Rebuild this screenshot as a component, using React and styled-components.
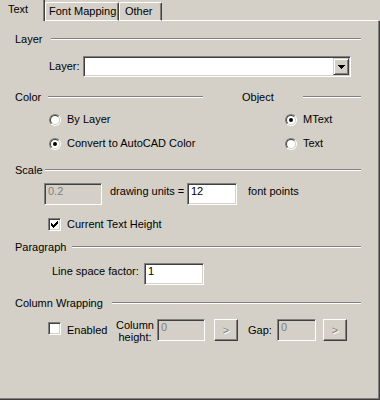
import styled, { createGlobalStyle } from "styled-components";

const GlobalStyle = createGlobalStyle`
  html, body {
    margin: 0;
    padding: 0;
    background: #d4d0c8;
  }
  body {
    font-family: "Liberation Sans", Arial, sans-serif;
    font-size: 11px;
    color: #000;
  }
`;

const Dialog = styled.div`
  width: 380px;
  height: 400px;
  overflow: hidden;
  display: flex;
  flex-direction: column;
  background: #d4d0c8;
`;

const TabStrip = styled.div`
  display: flex;
  align-items: flex-end;
  height: 21px;
  flex-shrink: 0;
`;

const ActiveTab = styled.div`
  box-sizing: border-box;
  width: 45px;
  height: 21px;
  padding: 3px 0 0 8px;
  line-height: 13px;
  border-right: 1px solid #404040;
  box-shadow: inset -1px 0 #808080;
`;

const Tab = styled.div`
  box-sizing: border-box;
  width: ${(p) => p.$w}px;
  height: 19px;
  padding: 2px 0 0 ${(p) => p.$pad}px;
  line-height: 13px;
  white-space: nowrap;
  border: 1px solid;
  border-color: #fff #404040 #fff #fff;
  border-radius: 2px 2px 0 0;
  box-shadow: inset -1px 0 #808080;
`;

const TabLine = styled.div`
  flex: 1;
  height: 1px;
  margin-right: 2px;
  background: #fff;
`;

const Panel = styled.div`
  flex: 1;
  box-sizing: border-box;
  padding: 11px 18px 0 15px;
  border-right: 1px solid #404040;
  border-bottom: 1px solid #404040;
  box-shadow: inset -1px -1px #808080;
  display: flex;
  flex-direction: column;
`;

const Header = styled.div`
  display: flex;
  align-items: center;
  height: 14px;
  line-height: 14px;
  margin-top: ${(p) => p.$mt || 0}px;
  &::after {
    content: "";
    flex: 1;
    border-top: 1px solid #808080;
    border-bottom: 1px solid #fff;
  }
`;

const HeaderLabel = styled.span`
  width: ${(p) => p.$w}px;
  flex-shrink: 0;
  white-space: nowrap;
`;

const Columns = styled.div`
  display: flex;
  gap: 39px;
  margin-top: ${(p) => p.$mt}px;
`;

const Column = styled.div`
  display: flex;
  flex-direction: column;
  ${(p) => (p.$w ? `width: ${p.$w}px;` : "flex: 1;")}
`;

const Row = styled.div`
  display: flex;
  align-items: ${(p) => p.$align || "center"};
  height: ${(p) => p.$h}px;
  margin-top: ${(p) => p.$mt}px;
  padding-left: ${(p) => p.$indent || 0}px;
  line-height: 13px;
  white-space: nowrap;
`;

const Label = styled.span`
  ${(p) => (p.$w ? `width: ${p.$w}px; flex-shrink: 0;` : "")}
  margin-left: ${(p) => p.$ml || 0}px;
`;

const StackLabel = styled.span`
  width: 38px;
  margin-right: 3px;
  line-height: 12px;
  padding-top: 1px;
  text-align: center;
  white-space: normal;
`;

const RadioOuter = styled.span`
  box-sizing: border-box;
  width: 12px;
  height: 12px;
  flex-shrink: 0;
  display: flex;
  border-radius: 50%;
  border: 1px solid;
  border-color: #808080 #fff #fff #808080;
`;

const RadioInner = styled.span`
  box-sizing: border-box;
  flex: 1;
  display: flex;
  align-items: center;
  justify-content: center;
  border-radius: 50%;
  border: 1px solid;
  border-color: #404040 #d4d0c8 #d4d0c8 #404040;
  background: #fff;
  &::after {
    content: "";
    width: 4px;
    height: 4px;
    border-radius: 50%;
    background: ${(p) => (p.$on ? "#000" : "transparent")};
  }
`;

const CheckBox = styled.span`
  box-sizing: border-box;
  width: 13px;
  height: 13px;
  flex-shrink: 0;
  display: flex;
  align-items: center;
  justify-content: center;
  border: 1px solid;
  border-color: #808080 #fff #fff #808080;
  box-shadow: inset 1px 1px #404040, inset -1px -1px #d4d0c8;
  background: #fff;
  ${(p) => (p.$top ? `align-self: flex-start; margin-top: ${p.$top}px;` : "")}
`;

const Field = styled.div`
  box-sizing: border-box;
  width: ${(p) => p.$w}px;
  height: 22px;
  flex-shrink: 0;
  padding: 1px 0 0 3px;
  line-height: 13px;
  border: 1px solid;
  border-color: #808080 #fff #fff #808080;
  box-shadow: inset 1px 1px #404040, inset -1px -1px #d4d0c8;
  background: ${(p) => (p.$disabled ? "#d4d0c8" : "#fff")};
  color: ${(p) => (p.$disabled ? "#808080" : "#000")};
`;

const Combo = styled.div`
  box-sizing: border-box;
  width: 268px;
  height: 21px;
  padding: 1px;
  display: flex;
  justify-content: flex-end;
  border: 1px solid;
  border-color: #808080 #fff #fff #808080;
  box-shadow: inset 1px 1px #404040, inset -1px -1px #d4d0c8;
  background: #fff;
`;

const DropButton = styled.span`
  box-sizing: border-box;
  width: 16px;
  height: 17px;
  display: flex;
  align-items: center;
  justify-content: center;
  border: 1px solid;
  border-color: #d4d0c8 #404040 #404040 #d4d0c8;
  box-shadow: inset 1px 1px #fff, inset -1px -1px #808080;
  background: #d4d0c8;
`;

const SmallButton = styled.div`
  box-sizing: border-box;
  width: 24px;
  height: 22px;
  margin-left: ${(p) => p.$ml}px;
  display: flex;
  align-items: center;
  justify-content: center;
  border: 1px solid;
  border-color: #fff #404040 #404040 #fff;
  box-shadow: inset -1px -1px #808080, inset 1px 1px #d4d0c8;
  color: #808080;
  text-shadow: 1px 1px #fff;
`;

const Radio = ({ on, children }) => (
  <>
    <RadioOuter>
      <RadioInner $on={on} />
    </RadioOuter>
    <Label $ml={6}>{children}</Label>
  </>
);

const Check = () => (
  <svg width="7" height="7" viewBox="0 0 7 7" shapeRendering="crispEdges">
    <path
      d="M0 2h1v3H0z M1 3h1v3H1z M2 4h1v3H2z M3 3h1v3H3z M4 2h1v3H4z M5 1h1v3H5z M6 0h1v3H6z"
      fill="#000"
    />
  </svg>
);

const Arrow = () => (
  <svg width="7" height="4" viewBox="0 0 7 4" shapeRendering="crispEdges">
    <path d="M0 0h7v1H0z M1 1h5v1H1z M2 2h3v1H2z M3 3h1v1H3z" fill="#000" />
  </svg>
);

export default function App() {
  return (
    <Dialog>
      <GlobalStyle />
      <TabStrip>
        <ActiveTab>Text</ActiveTab>
        <Tab $w={74} $pad={3}>Font Mapping</Tab>
        <Tab $w={43} $pad={5}>Other</Tab>
        <TabLine />
      </TabStrip>
      <Panel>
        <Header>
          <HeaderLabel $w={36}>Layer</HeaderLabel>
        </Header>
        <Row $mt={10} $h={21} $indent={34}>
          <Label $w={34}>Layer:</Label>
          <Combo>
            <DropButton>
              <Arrow />
            </DropButton>
          </Combo>
        </Row>

        <Columns $mt={13}>
          <Column $w={188}>
            <Header>
              <HeaderLabel $w={33}>Color</HeaderLabel>
            </Header>
            <Row $mt={9} $h={13} $indent={34}>
              <Radio>By Layer</Radio>
            </Row>
            <Row $mt={11} $h={13} $indent={34}>
              <Radio on>Convert to AutoCAD Color</Radio>
            </Row>
          </Column>
          <Column>
            <Header>
              <HeaderLabel $w={61}>Object</HeaderLabel>
            </Header>
            <Row $mt={9} $h={13} $indent={43}>
              <Radio on>MText</Radio>
            </Row>
            <Row $mt={11} $h={13} $indent={43}>
              <Radio>Text</Radio>
            </Row>
          </Column>
        </Columns>

        <Header $mt={13}>
          <HeaderLabel $w={30}>Scale</HeaderLabel>
        </Header>
        <Row $mt={6} $h={22} $indent={29} $align="baseline">
          <Field $w={58} $disabled>
            0.2
          </Field>
          <Label $w={77} $ml={8}>
            drawing units =
          </Label>
          <Field $w={50}>12</Field>
          <Label $ml={11}>font points</Label>
        </Row>
        <Row $mt={13} $h={13} $indent={33}>
          <CheckBox>
            <Check />
          </CheckBox>
          <Label $ml={6}>Current Text Height</Label>
        </Row>

        <Header $mt={9}>
          <HeaderLabel $w={57}>Paragraph</HeaderLabel>
        </Header>
        <Row $mt={9} $h={22} $indent={37} $align="baseline">
          <Label $w={92}>Line space factor:</Label>
          <Field $w={60}>1</Field>
        </Row>

        <Header $mt={11}>
          <HeaderLabel $w={97}>Column Wrapping</HeaderLabel>
        </Header>
        <Row $mt={9} $h={22} $indent={33}>
          <CheckBox $top={3} />
          <Label $w={49} $ml={6}>
            Enabled
          </Label>
          <StackLabel>Column height:</StackLabel>
          <Field $w={48} $disabled>
            0
          </Field>
          <SmallButton $ml={9}>&gt;</SmallButton>
          <Label $w={29} $ml={10}>
            Gap:
          </Label>
          <Field $w={39} $disabled>
            0
          </Field>
          <SmallButton $ml={7}>&gt;</SmallButton>
        </Row>
      </Panel>
    </Dialog>
  );
}
